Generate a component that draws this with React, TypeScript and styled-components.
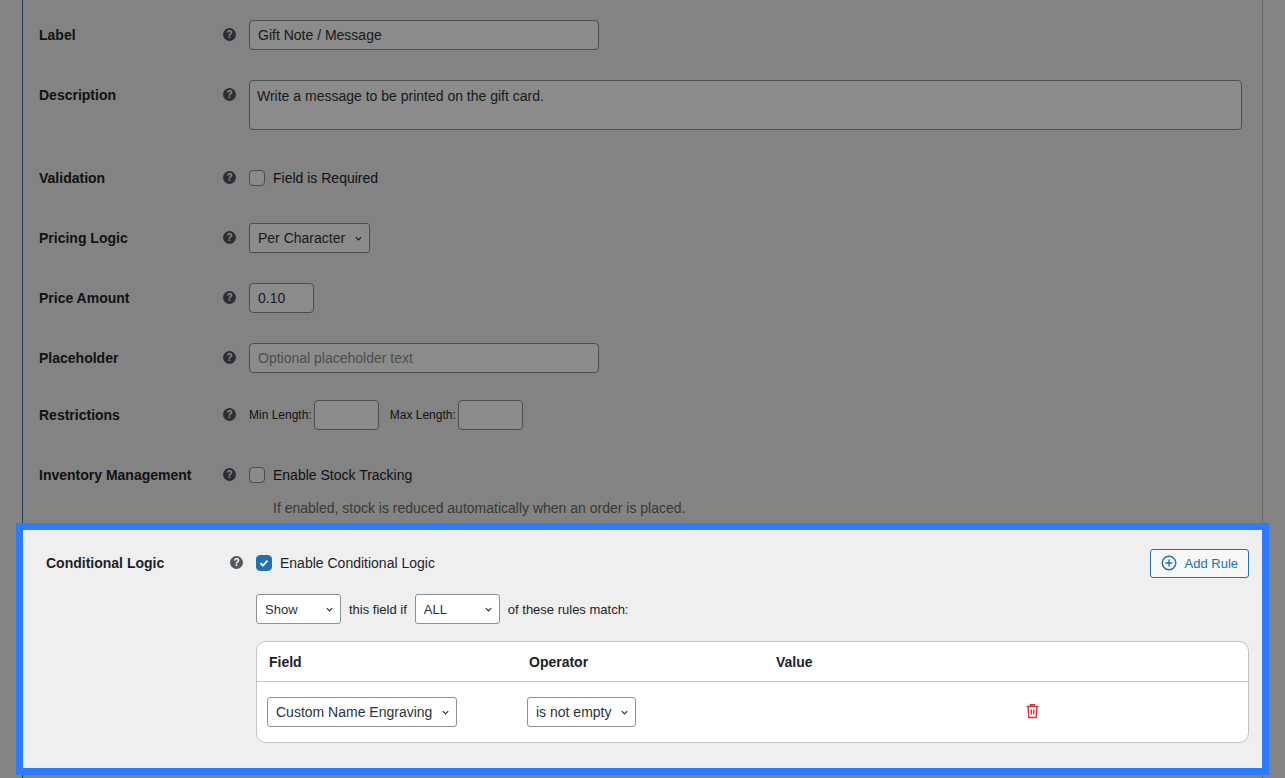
import React from 'react'
import styled, { createGlobalStyle } from 'styled-components'

const GlobalStyle = createGlobalStyle`
  body {
    margin: 0;
    background: #f0f0f1;
    font-family: 'Liberation Sans', Arial, sans-serif;
    font-size: 14px;
    color: #1d2327;
    overflow: hidden;
  }
`

const Page = styled.div`
  height: 778px;
  padding: 0 22px;
  box-sizing: border-box;
`

const Panel = styled.div`
  border-left: 1px solid #2271b1;
  border-right: 1px solid #c3c4c7;
  padding-top: 20px;
`

const Row = styled.div<{ h?: number }>`
  display: grid;
  grid-template-columns: 184px 26px 1fr;
  align-items: start;
  padding: 0 20px 0 16px;
  height: ${(p) => (p.h ? `${p.h}px` : 'auto')};
`

const Label = styled.div`
  font-weight: bold;
  line-height: 30px;
`

const Help = styled.span`
  margin-top: 8px;
  width: 13px;
  height: 13px;
  border-radius: 50%;
  background: #50575e;
  color: #fff;
  font-size: 10px;
  font-weight: bold;
  line-height: 13px;
  text-align: center;
`

const Line = styled.div`
  display: flex;
  align-items: center;
  gap: 8px;
  min-height: 30px;
`

const Input = styled.div<{ w: number; muted?: boolean }>`
  width: ${(p) => p.w}px;
  height: 30px;
  box-sizing: border-box;
  border: 1px solid #8c8f94;
  border-radius: 4px;
  background: #fff;
  padding: 0 8px;
  line-height: 28px;
  color: ${(p) => (p.muted ? '#8c8f94' : '#2c3338')};
`

const TextArea = styled.div`
  height: 50px;
  box-sizing: border-box;
  border: 1px solid #8c8f94;
  border-radius: 4px;
  background: #fff;
  padding: 7px 7px;
  color: #2c3338;
`

const Select = styled.div<{ w: number }>`
  width: ${(p) => p.w}px;
  height: 30px;
  box-sizing: border-box;
  border: 1px solid #8c8f94;
  border-radius: 3px;
  background: #fff;
  padding: 0 6px 0 8px;
  display: flex;
  align-items: center;
  justify-content: space-between;
  color: #2c3338;
  font-size: 14px;
`

const Box = styled.span<{ on?: boolean }>`
  width: 16px;
  height: 16px;
  box-sizing: border-box;
  border-radius: 4px;
  border: 1px solid ${(p) => (p.on ? '#2271b1' : '#8c8f94')};
  background: ${(p) => (p.on ? '#2271b1' : '#fff')};
  display: inline-flex;
  align-items: center;
  justify-content: center;
`

const Small = styled.span`
  font-size: 12px;
`

const Hint = styled.div`
  color: #646970;
  margin: 10px 0 0 24px;
`

const Overlay = styled.div`
  position: fixed;
  inset: 0;
  background: rgba(0, 0, 0, 0.455);
  z-index: 1;
`

const Highlight = styled.div`
  position: relative;
  z-index: 2;
  margin: 0 -7px;
  border: 7px solid #2f7bff;
  background: #efefef;
  padding: 18px 0 25px 7px;
`

const LogicBody = styled.div`
  display: flex;
  flex-direction: column;
  gap: 16px;
`

const TopLine = styled(Line)`
  justify-content: space-between;
  margin-right: -7px;
`

const AddRule = styled.div`
  height: 29px;
  box-sizing: border-box;
  border: 1px solid #2271b1;
  border-radius: 3px;
  background: #f6f7f7;
  color: #2271b1;
  padding: 0 10px;
  display: flex;
  align-items: center;
  gap: 8px;
  font-size: 13px;
`

const Table = styled.div`
  margin-right: -7px;
  background: #fff;
  border: 1px solid #c3c4c7;
  border-radius: 10px;
  margin-top: 1px;
`

const TRow = styled.div<{ head?: boolean }>`
  display: grid;
  grid-template-columns: 260px 247px 1fr;
  align-items: center;
  height: ${(p) => (p.head ? '39px' : '60px')};
  padding: 0 12px;
  border-bottom: ${(p) => (p.head ? '1px solid #c3c4c7' : 'none')};
  font-weight: ${(p) => (p.head ? 'bold' : 'normal')};
`

const Save = styled.div`
  margin: 4px 0 0 13px;
  width: 70px;
  height: 30px;
  background: #2271b1;
  border-radius: 3px;
`

const Chevron = () => (
  <svg width="9" height="9" viewBox="0 0 10 10" fill="none" stroke="#2c3338" strokeWidth="1.3">
    <path d="M2 3.5l3 3 3-3" />
  </svg>
)

const Check = () => (
  <svg width="12" height="12" viewBox="0 0 12 12" fill="none" stroke="#fff" strokeWidth="1.8">
    <path d="M2.5 6.2l2.4 2.4 4.6-5" />
  </svg>
)

const App = () => {
  return (
    <>
      <GlobalStyle />
      <Page>
        <Panel>
          <Row h={60}>
            <Label>Label</Label>
            <Help>?</Help>
            <Input w={350}>Gift Note / Message</Input>
          </Row>
          <Row h={83}>
            <Label>Description</Label>
            <Help>?</Help>
            <TextArea>Write a message to be printed on the gift card.</TextArea>
          </Row>
          <Row h={60}>
            <Label>Validation</Label>
            <Help>?</Help>
            <Line>
              <Box />
              Field is Required
            </Line>
          </Row>
          <Row h={60}>
            <Label>Pricing Logic</Label>
            <Help>?</Help>
            <Select w={121}>
              Per Character <Chevron />
            </Select>
          </Row>
          <Row h={60}>
            <Label>Price Amount</Label>
            <Help>?</Help>
            <Input w={65}>0.10</Input>
          </Row>
          <Row h={57}>
            <Label>Placeholder</Label>
            <Help>?</Help>
            <Input w={350} muted>
              Optional placeholder text
            </Input>
          </Row>
          <Row h={60}>
            <Label>Restrictions</Label>
            <Help>?</Help>
            <Line style={{ gap: 2 }}>
              <Small>Min Length:</Small>
              <Input w={65} />
              <Small style={{ marginLeft: 9 }}>Max Length:</Small>
              <Input w={65} />
            </Line>
          </Row>
          <Row h={63}>
            <Label>Inventory Management</Label>
            <Help>?</Help>
            <div>
              <Line>
                <Box />
                Enable Stock Tracking
              </Line>
              <Hint>If enabled, stock is reduced automatically when an order is placed.</Hint>
            </div>
          </Row>
          <Highlight>
            <Row>
              <Label>Conditional Logic</Label>
              <Help>?</Help>
              <LogicBody>
                <TopLine>
                  <Line>
                    <Box on>
                      <Check />
                    </Box>
                    Enable Conditional Logic
                  </Line>
                  <AddRule>
                    <svg width="16" height="16" viewBox="0 0 16 16" fill="none" stroke="#2271b1" strokeWidth="1.4">
                      <circle cx="8" cy="8" r="6.8" />
                      <path d="M8 4.5v7M4.5 8h7" />
                    </svg>
                    Add Rule
                  </AddRule>
                </TopLine>
                <Line style={{ fontSize: 13 }}>
                  <Select w={85} style={{ fontSize: 13 }}>
                    Show <Chevron />
                  </Select>
                  this field if
                  <Select w={85} style={{ fontSize: 13 }}>
                    ALL <Chevron />
                  </Select>
                  of these rules match:
                </Line>
                <Table>
                  <TRow head>
                    <span>Field</span>
                    <span>Operator</span>
                    <span>Value</span>
                  </TRow>
                  <TRow>
                    <Select w={190} style={{ marginLeft: -2 }}>
                      Custom Name Engraving <Chevron />
                    </Select>
                    <Select w={109} style={{ marginLeft: -2 }}>
                      is not empty <Chevron />
                    </Select>
                    <span style={{ paddingLeft: 249 }}>
                      <svg width="15" height="16" viewBox="0 0 15 16" fill="none" stroke="#d63638" strokeWidth="1.4">
                        <path d="M1.5 3.5h12M5.5 3.5V1.7h4v1.8M3 3.5l.8 11h7.4l.8-11M6.3 6.5v5M8.7 6.5v5" />
                      </svg>
                    </span>
                  </TRow>
                </Table>
              </LogicBody>
            </Row>
          </Highlight>
          <Save />
        </Panel>
      </Page>
      <Overlay />
    </>
  )
}

export default App
